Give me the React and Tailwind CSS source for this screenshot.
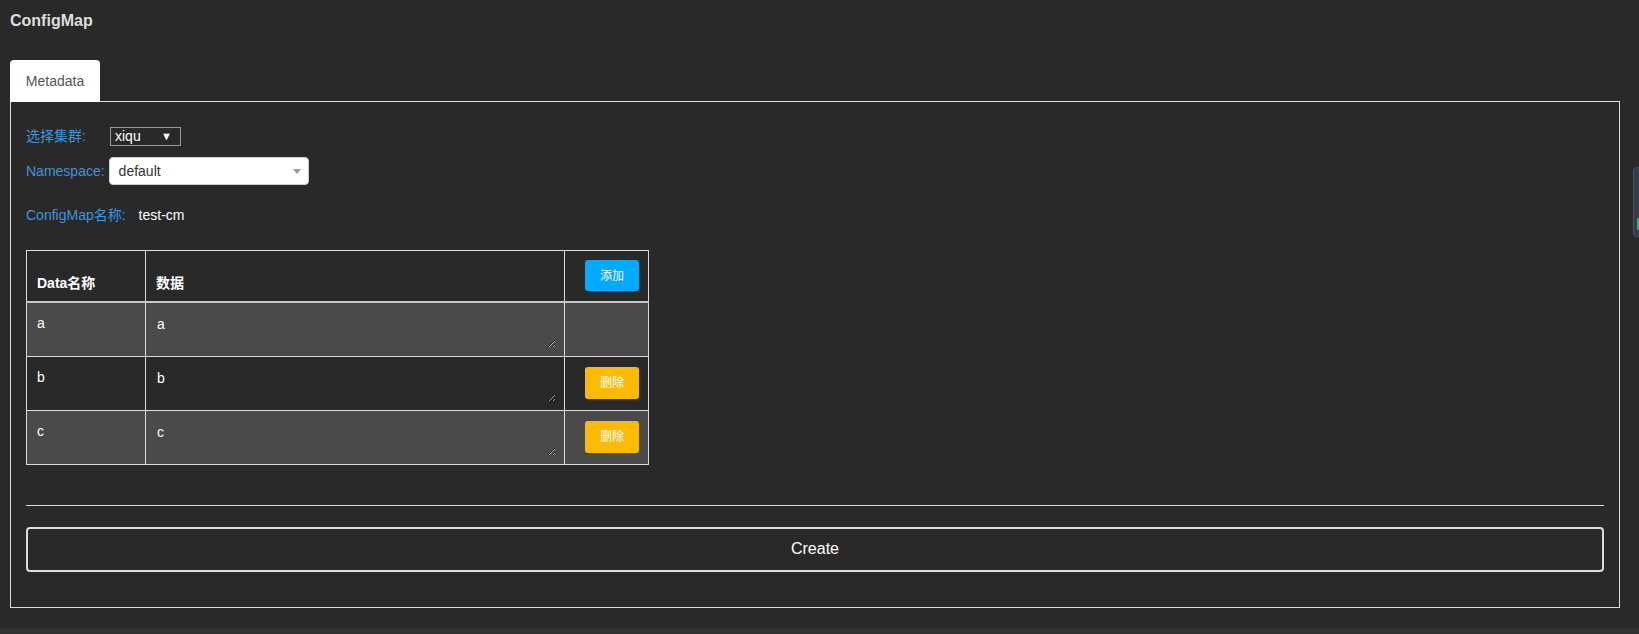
import React from "react";

const rows = [
  { k: "a", v: "a", del: false, bg: "bg-[#4a4a4a]" },
  { k: "b", v: "b", del: true, bg: "bg-[#292929]" },
  { k: "c", v: "c", del: true, bg: "bg-[#4a4a4a]" },
];

export default function App() {
  return (
    <div className="relative w-[1639px] h-[634px] bg-[#313131] font-['Liberation_Sans','Noto_Sans_CJK_SC',sans-serif] overflow-hidden">
      <div className="h-[628px] bg-[#292929] pl-[10px] pr-[19px] pt-[11px]">
        <div className="text-[16px] font-bold leading-[20px] text-[#dedede]">ConfigMap</div>
        <div className="mt-[29px] flex">
          <div className="relative z-10 -mb-px flex h-[42px] w-[90px] items-center justify-center rounded-t-[4px] bg-white text-[14px] text-[#555]">
            Metadata
          </div>
        </div>
        <div className="border border-[#dcdcdc] px-[15px] pt-[25px] pb-[35px]">
          <div className="flex h-[19px] items-center">
            <span className="w-[84px] text-[14px] leading-[19px] text-[#3f94dc]">选择集群:</span>
            <div className="flex h-[19px] w-[71px] items-center justify-between border border-[#9a9a9a] pl-[4px] pr-[8px] text-[14px] leading-[17px] text-white">
              <span>xiqu</span>
              <span className="text-[11px] leading-[11px]">▼</span>
            </div>
          </div>
          <div className="mt-[11px] flex h-[28px] items-center">
            <span className="text-[14px] text-[#3f94dc]">Namespace:</span>
            <div className="ml-[4px] flex h-[28px] w-[200px] items-center justify-between rounded-[4px] border border-[#cfcfcf] bg-white pl-[9px] pr-[7px] text-[14px] text-[#333]">
              <span>default</span>
              <span className="h-0 w-0 border-x-[4px] border-t-[5px] border-x-transparent border-t-[#999]"></span>
            </div>
          </div>
          <div className="mt-[20px] flex h-[20px] items-center text-[14px] leading-[20px]">
            <span className="text-[#3f94dc]">ConfigMap名称:</span>
            <span className="ml-[13px] text-white">test-cm</span>
          </div>
          <table className="mt-[25px] w-[622px] table-fixed border-collapse border border-[#dcdcdc] text-[14px] text-white">
            <colgroup>
              <col className="w-[119px]" />
              <col className="w-[419px]" />
              <col className="w-[84px]" />
            </colgroup>
            <thead>
              <tr className="h-[51px]">
                <th className="border border-b-2 border-[#dcdcdc] border-b-[#c8c8c8] px-[10px] pb-[8px] text-left align-bottom font-bold leading-[20px]">Data名称</th>
                <th className="border border-b-2 border-[#dcdcdc] border-b-[#c8c8c8] px-[10px] pb-[8px] text-left align-bottom font-bold leading-[20px]">数据</th>
                <th className="border border-b-2 border-[#dcdcdc] border-b-[#c8c8c8] pr-[9px] align-middle font-normal">
                  <div className="flex justify-end">
                    <button className="h-[31px] w-[54px] rounded-[3px] bg-[#00aaff] text-[12px] font-normal text-white">添加</button>
                  </div>
                </th>
              </tr>
            </thead>
            <tbody>
              {rows.map((r) => (
                <tr key={r.k} className={`h-[54px] ${r.bg}`}>
                  <td className="border border-[#dcdcdc] px-[10px] pt-[10px] align-top leading-[20px]">{r.k}</td>
                  <td className="border border-[#dcdcdc] p-[8px] align-top">
                    <textarea
                      defaultValue={r.v}
                      className="block h-[37px] w-full border-0 bg-transparent px-[3px] pt-[4px] text-[14px] leading-[18px] text-white outline-none"
                    />
                  </td>
                  <td className="border border-[#dcdcdc] pr-[9px] align-middle">
                    {r.del && (
                      <div className="flex justify-end">
                        <button className="h-[32px] w-[54px] rounded-[3px] bg-[#fcba05] text-[12px] text-white">删除</button>
                      </div>
                    )}
                  </td>
                </tr>
              ))}
            </tbody>
          </table>
          <div className="mt-[40px] h-px bg-[#dcdcdc]"></div>
          <button className="mt-[21px] flex h-[45px] w-full items-center justify-center rounded-[4px] border-2 border-[#dcdcdc] text-[16px] text-white">
            Create
          </button>
        </div>
      </div>
      <div className="absolute left-[1633px] top-[167px] h-[70px] w-[12px] rounded-l-[4px] border border-[#4a5060] bg-[#363b47]">
        <div className="ml-[3px] mt-[50px] h-[12px] w-[6px] bg-[#2fae86]"></div>
      </div>
    </div>
  );
}
